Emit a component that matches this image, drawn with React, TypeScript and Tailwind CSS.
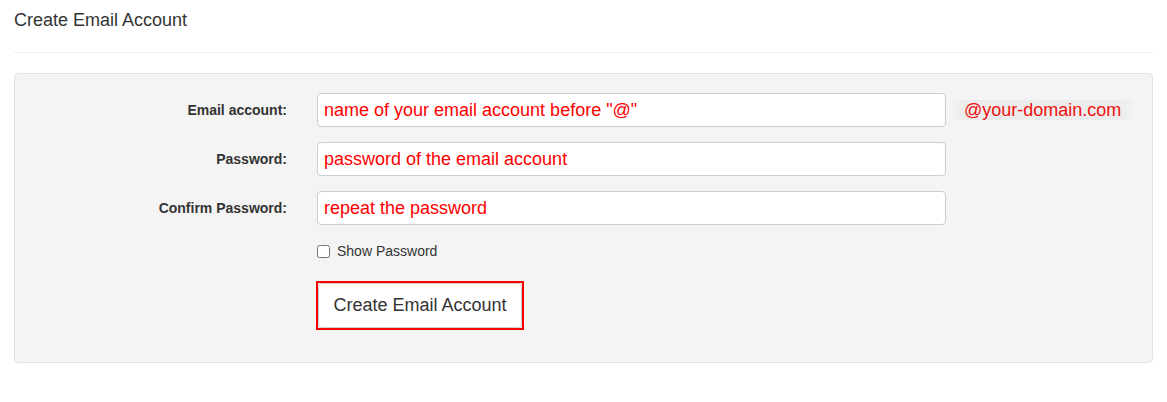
import React from "react";

function Row({ label, value, extra }: { label: string; value: string; extra?: React.ReactNode }) {
  return (
    <div className="flex items-center h-[34px]">
      <label className="w-[253px] text-right text-[14px] font-bold text-[#333] leading-[20px]">{label}</label>
      <input
        readOnly
        defaultValue={value}
        className="ml-[30px] w-[629px] h-[34px] border border-[#ccc] rounded-[4px] bg-white pl-[6px] text-[18px] text-[#ff0000] outline-none"
        style={{ fontFamily: '"Liberation Sans", Arial, sans-serif' }}
      />
      {extra}
    </div>
  );
}

export default function App() {
  return (
    <div className="px-[14px] bg-white min-h-[402px]" style={{ fontFamily: '"Liberation Sans", Arial, sans-serif' }}>
      <div className="pt-[10px] text-[18px] leading-[20px] text-[#333]">Create Email Account</div>
      <div className="mt-[22px] border-t border-[#eee]" />
      <div className="mt-[20px] bg-[#f4f4f4] border border-[#e3e3e3] rounded-[4px] pt-[19px] pb-[32px] px-[19px]">
        <Row
          label="Email account:"
          value={'name of your email account before "@"'}
          extra={
            <span className="ml-[7px] px-[11px] h-[20px] leading-[20px] text-[18px] text-[#f01010] bg-[linear-gradient(to_right,#f1f1f1,#ececec_8%,#ececec_92%,#f1f1f1)]">
              @your-domain.com
            </span>
          }
        />
        <div className="mt-[15px]">
          <Row label="Password:" value="password of the email account" />
        </div>
        <div className="mt-[15px]">
          <Row label="Confirm Password:" value="repeat the password" />
        </div>
        <div className="mt-[16px] ml-[283px] flex items-center h-[20px]">
          <input type="checkbox" className="w-[13px] h-[13px] m-0" />
          <span className="ml-[7px] text-[14px] text-[#333] leading-[20px]">Show Password</span>
        </div>
        <div className="mt-[20px] ml-[282px] flex">
          <div className="border-2 border-[#ff0000]">
            <button className="w-[204px] h-[45px] bg-white border border-[#ccc] rounded-[4px] text-[18px] text-[#333] flex items-center justify-center">
              Create Email Account
            </button>
          </div>
        </div>
      </div>
    </div>
  );
}
